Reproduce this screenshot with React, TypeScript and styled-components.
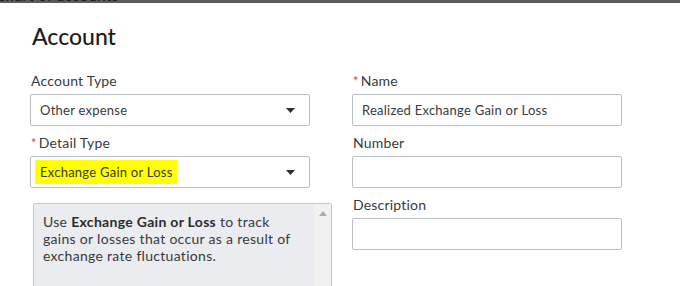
import React from 'react';
import styled, { createGlobalStyle } from 'styled-components';

const GlobalStyle = createGlobalStyle`
  html, body {
    margin: 0;
    padding: 0;
    background: #ffffff;
    overflow: hidden;
  }
  body {
    font-family: Lato, 'Open Sans', sans-serif;
    color: #393a3d;
  }
`;

// Page behind the dialog, only its bottom edge shows
const Backdrop = styled.div`
  height: 3px;
  background: #5b5b5b;
  overflow: hidden;
`;

const BackdropText = styled.span`
  display: block;
  margin-top: -12px;
  margin-left: -2px;
  font-size: 15px;
  line-height: 15px;
  font-weight: 600;
  letter-spacing: 0.4px;
  color: #1c1c1c;
`;

const Dialog = styled.div`
  padding: 19px 0 0 30px;
`;

const Title = styled.h1`
  margin: 0 0 21px 2px;
  font-size: 23px;
  line-height: 28px;
  font-weight: 500;
  color: #1b1b1b;
`;

const Columns = styled.div`
  display: grid;
  grid-template-columns: 280px 270px;
  column-gap: 42px;
`;

const Column = styled.div`
  display: flex;
  flex-direction: column;
`;

const Field = styled.div`
  display: flex;
  flex-direction: column;
  margin-bottom: 7px;
`;

const Label = styled.label`
  display: flex;
  align-items: baseline;
  font-size: 14px;
  line-height: 18px;
  letter-spacing: 0.2px;
  margin: 0 0 5px 1px;
  padding-top: 1px;
  height: 17px;
  color: #393a3d;
`;

const Required = styled.span`
  color: #e0462f;
  font-size: 13px;
  margin-right: 2px;
`;

const Box = styled.div`
  box-sizing: border-box;
  height: 32px;
  border: 1px solid #babec5;
  border-radius: 2px;
  background: #fff;
  display: flex;
  align-items: center;
  padding: 0 12px 0 9px;
  font-size: 13px;
  letter-spacing: 0.25px;
  color: #393a3d;
`;

const BoxText = styled.span`
  flex: 1;
  white-space: nowrap;
`;

const Marked = styled.span`
  background: #ffff00;
  margin-left: -5px;
  padding: 4px 4px 4px 5px;
`;

const Arrow = styled.svg`
  width: 9px;
  height: 5px;
  margin-right: 2px;
`;

const HelpBox = styled.div`
  box-sizing: border-box;
  margin: 8px 0 0 3px;
  width: 299px;
  height: 100px;
  border: 1px solid #c3c6cc;
  border-radius: 2px;
  background: #ebecef;
  display: flex;
`;

const HelpText = styled.p`
  flex: 1;
  margin: 0;
  padding: 9px 14px 0 9px;
  font-size: 14px;
  line-height: 17px;
  letter-spacing: 0.3px;
  color: #393a3d;

  strong {
    font-weight: 700;
    color: #2b2c2e;
  }
`;

const ScrollTrack = styled.div`
  width: 17px;
  background: #f1f1f2;
  display: flex;
  justify-content: center;
  padding-top: 7px;
`;

const ScrollArrow = styled.svg`
  width: 8px;
  height: 5px;
`;

const DropArrow = () => (
  <Arrow viewBox="0 0 9 5">
    <path d="M0 0h9L4.5 5z" fill="#2f3033" />
  </Arrow>
);

const Select: React.FC<{ children: React.ReactNode }> = ({ children }) => (
  <Box>
    <BoxText>{children}</BoxText>
    <DropArrow />
  </Box>
);

const App: React.FC = () => {
  return (
    <>
      <GlobalStyle />
      <Backdrop>
        <BackdropText>chart of accounts</BackdropText>
      </Backdrop>
      <Dialog>
        <Title>Account</Title>
        <Columns>
          <Column>
            <Field>
              <Label>Account Type</Label>
              <Select>Other expense</Select>
            </Field>
            <Field>
              <Label>
                <Required>*</Required>Detail Type
              </Label>
              <Select>
                <Marked>Exchange Gain or Loss</Marked>
              </Select>
            </Field>
            <HelpBox>
              <HelpText>
                Use <strong>Exchange Gain or Loss</strong> to track gains or losses that
                occur as a result of exchange rate fluctuations.
              </HelpText>
              <ScrollTrack>
                <ScrollArrow viewBox="0 0 8 5">
                  <path d="M4 0l4 5H0z" fill="#a9abaf" />
                </ScrollArrow>
              </ScrollTrack>
            </HelpBox>
          </Column>
          <Column>
            <Field>
              <Label>
                <Required>*</Required>Name
              </Label>
              <Box>
                <BoxText>Realized Exchange Gain or Loss</BoxText>
              </Box>
            </Field>
            <Field>
              <Label>Number</Label>
              <Box />
            </Field>
            <Field>
              <Label>Description</Label>
              <Box />
            </Field>
          </Column>
        </Columns>
      </Dialog>
    </>
  );
};

export default App;
